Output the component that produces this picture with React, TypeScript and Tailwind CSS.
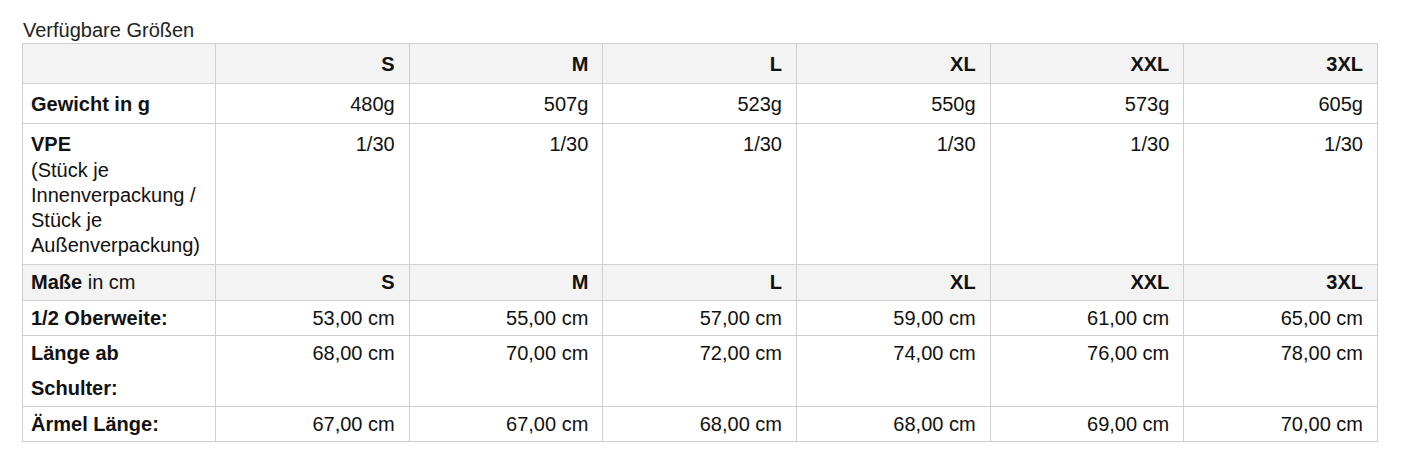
const sizes = ["S", "M", "L", "XL", "XXL", "3XL"];
const weights = ["480g", "507g", "523g", "550g", "573g", "605g"];

const measures = [
  { label: "1/2 Oberweite:", lh: "leading-[34px]", values: ["53,00 cm", "55,00 cm", "57,00 cm", "59,00 cm", "61,00 cm", "65,00 cm"] },
  { label: "Länge ab Schulter:", lh: "leading-[35px]", values: ["68,00 cm", "70,00 cm", "72,00 cm", "74,00 cm", "76,00 cm", "78,00 cm"] },
  { label: "Ärmel Länge:", lh: "leading-[34px]", values: ["67,00 cm", "67,00 cm", "68,00 cm", "68,00 cm", "69,00 cm", "70,00 cm"] },
];

const cell = "border border-[#cfcfcf] pl-[8px] pr-[14px] align-top";
const upper = "pt-[8px] pb-[6px] leading-[25.2px]";

export default function App() {
  return (
    <div className="min-h-screen bg-white text-[#111] text-[20px] font-['Liberation_Sans',Arial,sans-serif]">
      <div className="pl-[22px] pr-[28px]">
        <div className="pt-[18px] leading-[25px] text-[#222] pl-[1px]">Verfügbare Größen</div>

        <table className="w-full table-fixed border-collapse">
          <colgroup>
            <col className="w-[193px]" />
            {sizes.map((s) => (
              <col key={s} />
            ))}
          </colgroup>
          <tbody>
            {/* Sizes header */}
            <tr className="bg-[#f3f3f3]">
              <td className={`${cell} ${upper}`} />
              {sizes.map((s) => (
                <td key={s} className={`${cell} ${upper} text-right font-bold`}>
                  {s}
                </td>
              ))}
            </tr>

            <tr>
              <td className={`${cell} ${upper} font-bold`}>Gewicht in g</td>
              {weights.map((w, i) => (
                <td key={i} className={`${cell} ${upper} text-right`}>
                  {w}
                </td>
              ))}
            </tr>

            <tr>
              <td className={`${cell} ${upper}`}>
                <span className="font-bold">VPE</span>
                <br />
                (Stück je Innenverpackung / Stück je Außenverpackung)
              </td>
              {sizes.map((s) => (
                <td key={s} className={`${cell} ${upper} text-right`}>
                  1/30
                </td>
              ))}
            </tr>

            {/* Measurements header */}
            <tr className="bg-[#f3f3f3]">
              <td className={`${cell} pt-0 pb-0 leading-[35px]`}>
                <span className="font-bold">Maße</span> in cm
              </td>
              {sizes.map((s) => (
                <td key={s} className={`${cell} pt-0 pb-0 leading-[35px] text-right font-bold`}>
                  {s}
                </td>
              ))}
            </tr>

            {measures.map((m) => (
              <tr key={m.label}>
                <td className={`${cell} pt-0 pb-0 ${m.lh} font-bold`}>{m.label}</td>
                {m.values.map((v, i) => (
                  <td key={i} className={`${cell} pt-0 pb-0 ${m.lh} text-right`}>
                    {v}
                  </td>
                ))}
              </tr>
            ))}
          </tbody>
        </table>
      </div>
    </div>
  );
}
